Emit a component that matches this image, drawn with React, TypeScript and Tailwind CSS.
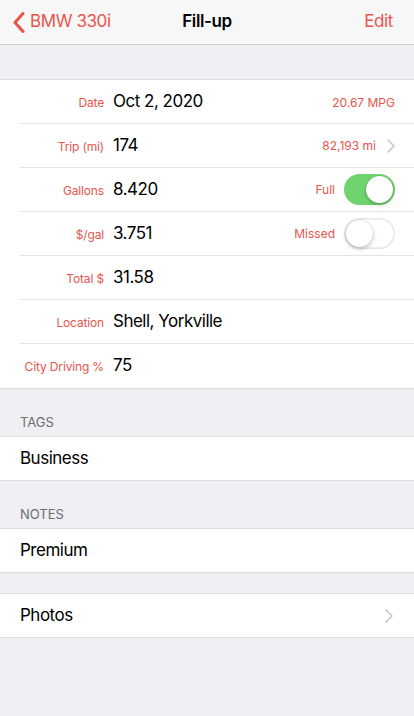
import { useState } from 'react'

const font = { fontFamily: 'Inter, "Liberation Sans", sans-serif' }

function Chevron() {
  return (
    <svg width="8" height="14" viewBox="0 0 8 14" className="shrink-0">
      <path d="M1 1l6 6-6 6" fill="none" stroke="#c4c4c9" strokeWidth="1.6" strokeLinecap="round" strokeLinejoin="round" />
    </svg>
  )
}

function Toggle({ on, onClick }: { on: boolean; onClick: () => void }) {
  return (
    <button
      onClick={onClick}
      className={`relative h-[31px] w-[51px] shrink-0 rounded-full transition-colors ${
        on ? 'bg-[#6fd46d]' : 'bg-white shadow-[inset_0_0_0_1.5px_#e6e6e9]'
      }`}
    >
      <span
        className={`absolute top-[2px] h-[27px] w-[27px] rounded-full bg-white shadow-[0_2px_4px_rgba(0,0,0,0.22),0_0_1px_rgba(0,0,0,0.25)] transition-all ${
          on ? 'left-[22px]' : 'left-[2px]'
        }`}
      />
    </button>
  )
}

interface RowProps {
  label: string
  value: string
  right?: React.ReactNode
  last?: boolean
}

function FieldRow({ label, value, right, last }: RowProps) {
  return (
    <div className="flex h-[44px] pl-5">
      <div className={`flex flex-1 items-center pr-[19px] ${last ? '' : 'border-b border-[#e3e3e6]'}`}>
        <div className="flex flex-1 items-baseline">
          <span className="w-[84px] shrink-0 text-right text-[12px] tracking-[-0.15px] text-[#e9544b]">{label}</span>
          <span className="ml-[9px] text-[17px] tracking-[-0.5px] text-black">{value}</span>
        </div>
        {right}
      </div>
    </div>
  )
}

export default function App() {
  const [full, setFull] = useState(true)
  const [missed, setMissed] = useState(false)

  return (
    <div className="flex min-h-[716px] w-[414px] flex-col bg-[#efeff4]" style={font}>
      {/* Nav bar */}
      <div className="relative flex h-[45px] items-center justify-between border-b border-[#cfcfd3] bg-[#f7f7f8] px-[13px]">
        <div className="flex items-center gap-[5px] text-[17px] tracking-[-0.4px] text-[#e9544b]">
          <svg width="12" height="21" viewBox="0 0 12 21">
            <path d="M10 1.5L2 10.5l8 9" fill="none" stroke="#e9544b" strokeWidth="3" strokeLinecap="round" strokeLinejoin="round" />
          </svg>
          <span>BMW 330i</span>
        </div>
        <span className="absolute left-1/2 -translate-x-1/2 text-[17px] font-semibold tracking-[-0.4px] text-black">Fill-up</span>
        <span className="pr-[8px] text-[17px] tracking-[-0.4px] text-[#e9544b]">Edit</span>
      </div>

      <div className="h-[34px]" />

      {/* Fill-up fields */}
      <div className="border-y border-[#dedee2] bg-white">
        <FieldRow
          label="Date"
          value="Oct 2, 2020"
          right={<span className="self-center pt-[3px] text-[12px] text-[#e9544b]">20.67 MPG</span>}
        />
        <FieldRow
          label="Trip (mi)"
          value="174"
          right={
            <div className="flex items-center gap-[11px] pt-[1px]">
              <span className="text-[12px] text-[#e9544b]">82,193 mi</span>
              <Chevron />
            </div>
          }
        />
        <FieldRow
          label="Gallons"
          value="8.420"
          right={
            <div className="flex items-center gap-[9px]">
              <span className="text-[12px] text-[#e9544b]">Full</span>
              <Toggle on={full} onClick={() => setFull(!full)} />
            </div>
          }
        />
        <FieldRow
          label="$/gal"
          value="3.751"
          right={
            <div className="flex items-center gap-[9px]">
              <span className="text-[12px] text-[#e9544b]">Missed</span>
              <Toggle on={missed} onClick={() => setMissed(!missed)} />
            </div>
          }
        />
        <FieldRow label="Total $" value="31.58" />
        <FieldRow label="Location" value="Shell, Yorkville" />
        <FieldRow label="City Driving %" value="75" last />
      </div>

      {/* Tags */}
      <div className="px-5 pb-[6px] pt-[25px] text-[13px] leading-[16px] uppercase text-[#6d6d72]">Tags</div>
      <div className="flex h-[45px] items-center border-y border-[#dedee2] bg-white px-5 text-[17px] tracking-[-0.5px] text-black">
        Business
      </div>

      {/* Notes */}
      <div className="px-5 pb-[6px] pt-[25px] text-[13px] leading-[16px] uppercase text-[#6d6d72]">Notes</div>
      <div className="flex h-[45px] items-center border-y border-[#dedee2] bg-white px-5 text-[17px] tracking-[-0.5px] text-black">
        Premium
      </div>

      <div className="h-[20px]" />

      <div className="flex h-[45px] items-center justify-between border-y border-[#dedee2] bg-white pl-5 pr-[21px] text-[17px] tracking-[-0.5px] text-black">
        <span>Photos</span>
        <Chevron />
      </div>
    </div>
  )
}
